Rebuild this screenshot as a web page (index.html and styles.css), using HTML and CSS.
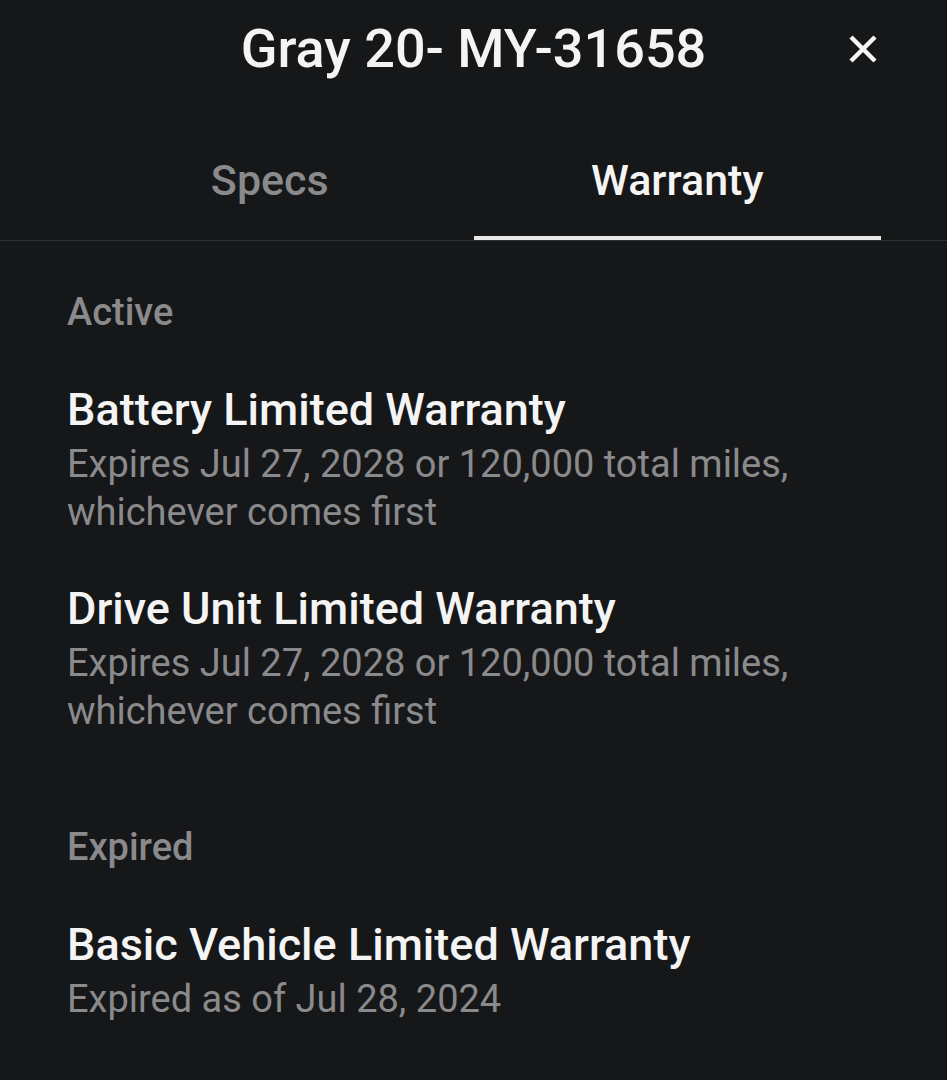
FILE: index.html
```html
<!DOCTYPE html>
<html lang="en">
<head>
    <meta charset="UTF-8">
    <meta name="viewport" content="width=device-width, initial-scale=1.0">
    <title>Warranty</title>
    <link rel="stylesheet" href="styles.css">
</head>
<body>
    <div class="panel">
        <div class="cabecera">
            <span></span>
            <h1>Gray 20- MY-31658</h1>
            <button class="cerrar" aria-label="Close">
                <svg width="30" height="30" viewBox="0 0 30 30">
                    <path d="M3 3 L27 27 M27 3 L3 27" stroke="#f4f4f4" stroke-width="4.5" fill="none"/>
                </svg>
            </button>
        </div>
        <div class="pestanas">
            <div class="pestana">Specs</div>
            <div class="pestana activa">Warranty</div>
        </div>
        <div class="contenido">
            <div class="seccion">
                <h2>Active</h2>
                <div class="lista">
                    <div class="item">
                        <h3>Battery Limited Warranty</h3>
                        <p>Expires Jul 27, 2028 or 120,000 total miles,<br>whichever comes first</p>
                    </div>
                    <div class="item">
                        <h3>Drive Unit Limited Warranty</h3>
                        <p>Expires Jul 27, 2028 or 120,000 total miles,<br>whichever comes first</p>
                    </div>
                </div>
            </div>
            <div class="seccion">
                <h2>Expired</h2>
                <div class="lista">
                    <div class="item">
                        <h3>Basic Vehicle Limited Warranty</h3>
                        <p>Expired as of Jul 28, 2024</p>
                    </div>
                </div>
            </div>
        </div>
    </div>
</body>
</html>
```

FILE: styles.css
```css
body{
    margin: 0;
    background-color: #161719;
    color: #f4f4f4;
    font-family: Roboto, "Liberation Sans", sans-serif;
}
.panel{
    min-height: 1080px;
}
.cabecera{
    display: grid;
    grid-template-columns: 1fr auto 1fr;
    align-items: center;
    padding: 19px 66px 0 66px;
}
.cabecera h1{
    margin: 0;
    font-size: 54px;
    line-height: 60px;
    font-weight: 500;
}
.cerrar{
    justify-self: end;
    background: none;
    border: none;
    padding: 0;
    margin-right: 3px;
    width: 30px;
    height: 30px;
    display: flex;
}
.pestanas{
    display: flex;
    margin-top: 76px;
    padding: 0 66px;
    border-bottom: 1px solid #2f3033;
}
.pestana{
    flex: 1;
    text-align: center;
    font-size: 43px;
    line-height: 50px;
    font-weight: 500;
    color: #8a8a8c;
    padding-bottom: 31px;
    border-bottom: 4px solid transparent;
}
.pestana.activa{
    color: #f4f4f4;
    border-bottom-color: #e8e8e8;
}
.contenido{
    display: flex;
    flex-direction: column;
    gap: 88px;
    padding: 47px 66px 0 67px;
}
.seccion h2{
    margin: 0 0 48px 0;
    font-size: 38px;
    line-height: 48px;
    font-weight: 500;
    color: #8a8a8c;
}
.lista{
    display: flex;
    flex-direction: column;
    gap: 47px;
}
.item h3{
    margin: 0 0 4px 0;
    font-size: 45px;
    line-height: 52px;
    font-weight: 500;
}
.item p{
    margin: 0;
    font-size: 38px;
    line-height: 48px;
    color: #8a8a8c;
}
```
